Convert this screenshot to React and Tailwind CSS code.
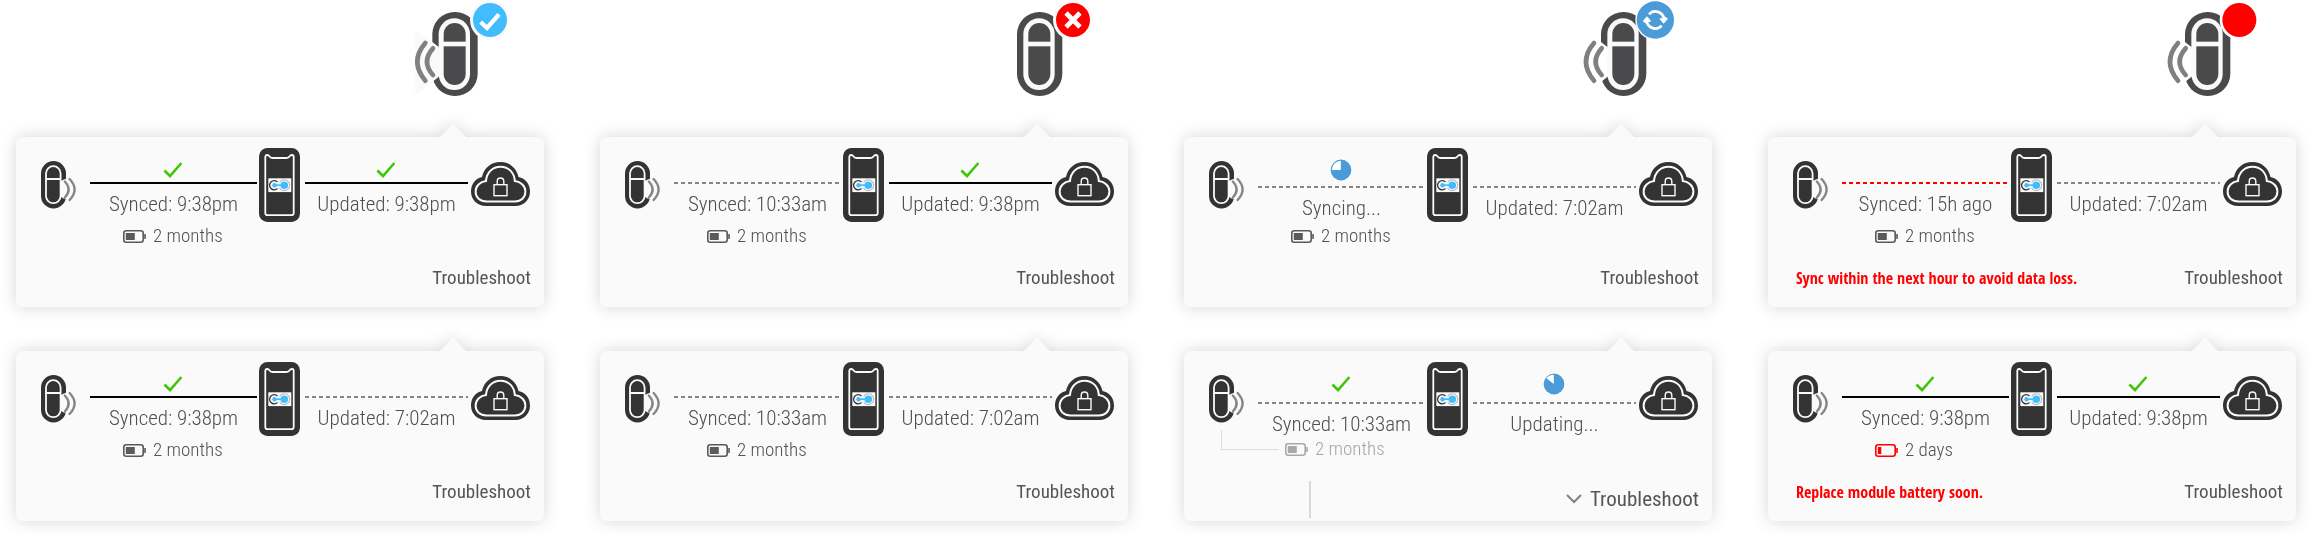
import React from "react";

const INK = "#333333";

function Badge({ kind }) {
  if (kind === "ok") {
    return (
      <g>
        <circle cx="270" cy="60" r="60" fill="#fafafa" />
        <circle cx="270" cy="60" r="51" fill="#41bdfd" />
        <path d="M242 66 L261 84 L297 43" fill="none" stroke="#fff" strokeWidth="13" />
      </g>
    );
  }
  if (kind === "error") {
    return (
      <g>
        <circle cx="267" cy="60" r="60" fill="#fafafa" />
        <circle cx="267" cy="60" r="51" fill="#ff0000" />
        <path d="M246 39 L288 81 M288 39 L246 81" fill="none" stroke="#fff" strokeWidth="14" />
      </g>
    );
  }
  if (kind === "sync") {
    return (
      <g>
        <circle cx="262" cy="60" r="60" fill="#fff" />
        <circle cx="262" cy="60" r="56" fill="#4a9bd8" />
        <path d="M243 43 A26 26 0 0 1 288 57" fill="none" stroke="#fff" strokeWidth="8" />
        <path d="M281 77 A26 26 0 0 1 236 63" fill="none" stroke="#fff" strokeWidth="8" />
        <path d="M274 56 L287 71 L300 56 L292 50 Z" fill="#fff" />
        <path d="M250 64 L237 49 L224 64 L232 70 Z" fill="#fff" />
      </g>
    );
  }
  return (
    <g>
      <circle cx="262" cy="60" r="59" fill="#fff" />
      <circle cx="262" cy="60" r="51" fill="#ff0000" />
    </g>
  );
}

function Device({ kind }) {
  const halo = kind === "ok" ? "#fafafa" : "#ffffff";
  return (
    <svg className="h-[110px] w-[130px]" viewBox="0 0 390 330" role="img" aria-label={"Module " + kind}>
      <g transform={kind === "ok" ? undefined : "translate(2 0)"}>
        {kind === "ok" && <path d="M46 91 L124 145 V228 L46 283 Z" fill={halo} />}
        <rect x="97" y="36" width="136" height="252" rx="67" fill="#4a4a4c" />
        {kind !== "error" && <path d="M90 121 L124 147 V224 L92 250 Z" fill={halo} />}
        <rect x="116" y="55" width="94" height="215" rx="47" fill="#fafafa" />
        <rect x="131" y="69" width="66" height="186" rx="33" fill="#4a4a4c" />
        <rect x="124" y="125" width="80" height="14" fill="#fafafa" />
        {kind !== "error" && (
          <g fill="none" stroke="#808080" strokeWidth="14" strokeLinecap="round">
            <path d="M99 145 Q63 185 99 225" />
            <path d="M76 129 Q28 185 76 242" />
          </g>
        )}
      </g>
      <Badge kind={kind} />
    </svg>
  );
}

function ModuleIcon() {
  return (
    <svg className="h-12 w-9" viewBox="0 0 36 48" aria-hidden="true">
      <rect x="0" y="0" width="25" height="47.5" rx="12.5" fill={INK} />
      <path d="M27 17 L23 18.5 L20 20 V36 L22.5 37.5 L27 38 Z" fill="#fafafa" />
      <rect x="5" y="5.2" width="14.6" height="37" rx="7.3" fill={INK} stroke="#fafafa" strokeWidth="1.8" />
      <path d="M5 18 H19.5" stroke="#fafafa" strokeWidth="2" />
      <g fill="none" stroke="#858585" strokeWidth="2.3" strokeLinecap="round">
        <path d="M23.8 20.5 Q31.5 28.5 23.8 36.5" />
        <path d="M28.6 18 Q38.6 28.5 28.6 39" />
      </g>
    </svg>
  );
}

function PhoneIcon() {
  return (
    <svg className="h-[74px] w-[41px]" viewBox="0 0 41 74" aria-hidden="true">
      <rect x="0" y="0" width="41" height="74" rx="8.5" fill={INK} />
      <path
        d="M6.3 65 V9 Q6.3 7 8 7 Q9.8 7 10.3 8.2 Q11.2 10 13.5 10 H27.5 Q29.8 10 30.7 8.2 Q31.2 7 33 7 Q34.7 7 34.7 9 V65 Q34.7 67.2 32.5 67.2 H8.5 Q6.3 67.2 6.3 65 Z"
        fill="none"
        stroke="#fafafa"
        strokeWidth="1.8"
      />
      <rect x="9.3" y="30.3" width="23" height="13.8" fill="#fafafa" />
      <path d="M18.5 34 A4.6 4.6 0 1 0 18.5 40.4" fill="none" stroke={INK} strokeWidth="1.3" />
      <path d="M20.6 34.5 A5.4 5.4 0 1 1 20.6 39.9" fill="none" stroke="#bdbdbd" strokeWidth="1.1" />
      <rect x="15" y="36.3" width="9" height="1.8" fill="#41bdfd" />
      <circle cx="15.5" cy="37.2" r="2.2" fill="#41bdfd" />
      <circle cx="25.3" cy="37.2" r="3.8" fill="#41bdfd" />
    </svg>
  );
}

function CloudIcon() {
  return (
    <svg className="h-11 w-[59px]" viewBox="0 0 59 44" aria-hidden="true">
      <path
        d="M15 44 C6 44 0 37.5 0 29.5 C0 22 4.5 16.5 11 15 C13 6 20 0 29.5 0 C38.5 0 45.5 6 47.5 15 C54.5 16.5 59 22 59 29.5 C59 37.5 53 44 44.5 44 Z"
        fill={INK}
      />
      <path
        d="M15.5 39.5 C9 39.5 4.6 35.5 4.6 29.5 C4.6 24 9 19.7 15 19 C15.5 10.5 21.5 4.7 29.5 4.7 C37.5 4.7 43.3 10.5 43.8 19 C50 19.7 54.4 24 54.4 29.5 C54.4 35.5 50 39.5 44 39.5 Z"
        fill="none"
        stroke="#fafafa"
        strokeWidth="2"
      />
      <rect x="23" y="22.7" width="13" height="11" fill="none" stroke="#fafafa" strokeWidth="1.4" />
      <path d="M26.2 22.5 V19.5 Q26.2 16 29.5 16 Q32.8 16 32.8 19.5 V22.5" fill="none" stroke="#fafafa" strokeWidth="1.4" />
    </svg>
  );
}

function Battery({ low }) {
  const color = low ? "#ff0000" : "#5a5a5a";
  return (
    <svg className="h-[13px] w-[23px] shrink-0" viewBox="0 0 23 13" aria-hidden="true">
      <rect x="0.8" y="0.8" width="19.4" height="11.4" rx="2.4" fill="none" stroke={color} strokeWidth="1.6" />
      <rect x="2.8" y="3" width={low ? 3.5 : 9} height="7" fill={color} />
      <path d="M22 4 V9" stroke={color} strokeWidth="1.6" />
    </svg>
  );
}

function Mark({ kind }) {
  if (kind === "check") {
    return (
      <svg className="h-4 w-5" viewBox="0 0 20 16" aria-hidden="true">
        <path d="M1.4 8.5 L7 14 L18.4 1" fill="none" stroke="#3fc60a" strokeWidth="2.6" />
      </svg>
    );
  }
  if (kind === "pie75" || kind === "pie85") {
    return (
      <svg className="h-[22px] w-[22px]" viewBox="0 0 22 22" aria-hidden="true">
        <circle cx="11" cy="11" r="11" fill="#ffffff" />
        <circle cx="11" cy="11" r="10.4" fill="#4a9bd8" />
        <path
          d={kind === "pie75" ? "M10.8 11 V1.8 A9 9 0 0 0 1.8 11 Z" : "M10.8 11 V1.8 A9 9 0 0 0 3.4 5.3 Z"}
          fill="#ffffff"
        />
      </svg>
    );
  }
  return null;
}

const LINES = {
  solid: "h-0.5 bg-black",
  dashed: "h-0.5 bg-[repeating-linear-gradient(90deg,#858585_0_4px,transparent_4px_7px)]",
  late: "h-0.5 bg-[repeating-linear-gradient(90deg,#ff0000_0_4px,transparent_4px_7px)]",
};

const SLOTS = {
  normal: "pt-[25px] h-[45px]",
  low: "pt-[22px] h-[49px]",
  lower: "pt-[25px] h-[51px]",
  lowest: "pt-[22px] h-[51px]",
};

function Link({ mark, line, slot = "normal", label, grow }) {
  return (
    <div className={"min-w-0 " + grow}>
      <div className={"flex justify-center " + SLOTS[slot]}>
        <Mark kind={mark} />
      </div>
      <div className={LINES[line]} />
      <p className="-mx-1 mt-2 text-center text-[21px] leading-6 whitespace-nowrap">{label}</p>
    </div>
  );
}

function Card({ left, right, battery = "2 months", low, warning, faded, expanded }) {
  return (
    <section className="relative flex h-[170px] flex-col rounded-md bg-[#fafafa] text-[#505050] drop-shadow-[0_0_8px_rgba(0,0,0,0.16)]">
      <svg className="absolute -top-[13px] right-[78px] h-[14px] w-[26px]" viewBox="0 0 26 14" aria-hidden="true">
        <path d="M0 13 L11.5 1 Q13 -0.5 14.5 1 L26 13 V14 H0 Z" fill="#fafafa" />
      </svg>
      <div className="flex h-[87px] items-start pr-[14px] pl-[25px]">
        <div className="w-[49px] shrink-0 pt-6">
          <ModuleIcon />
        </div>
        <Link {...left} grow="flex-[42]" />
        <div className="mr-[5px] ml-0.5 shrink-0 pt-[11px]">
          <PhoneIcon />
        </div>
        <Link {...right} grow="flex-[41]" />
        <div className="ml-[3px] shrink-0 pt-[25px]">
          <CloudIcon />
        </div>
      </div>
      {faded ? (
        <div className="-mt-2 flex h-8 items-start pl-[37px]">
          <span className="mr-[6px] h-5 w-[58px] border-b border-l border-[#dcdcdc]" />
          <div className="flex items-center gap-[7px] pt-[7px] text-[19px] leading-6 opacity-50">
            <Battery />
            <span>{battery}</span>
          </div>
        </div>
      ) : (
        <div className="flex items-center gap-[7px] pl-[107px] text-[19px] leading-6">
          <Battery low={low} />
          <span>{battery}</span>
        </div>
      )}
      {expanded ? (
        <div className="flex flex-1 items-start pt-[19px] pr-[13px] pl-[125px]">
          <span className="h-[37px] w-0.5 bg-[#d9d9d9]" />
          <button type="button" className="mt-1 ml-auto flex items-center gap-2 text-[21px] leading-7 font-normal text-[#555555]">
            <svg className="h-[10px] w-4" viewBox="0 0 16 10" aria-hidden="true">
              <path d="M1.5 1.5 L8 8 L14.5 1.5" fill="none" stroke="#808080" strokeWidth="2" strokeLinecap="round" />
            </svg>
            Troubleshoot
          </button>
        </div>
      ) : (
        <div className="flex flex-1 items-start justify-between pt-[18px] pr-[13px] pl-7">
          <p className="font-['Open_Sans_Condensed'] text-[16px] leading-6 font-bold text-[#ff0000]">{warning}</p>
          <button type="button" className="text-[19px] leading-6 font-normal text-[#555555]">
            Troubleshoot
          </button>
        </div>
      )}
    </section>
  );
}

const synced = { mark: "check", line: "solid", label: "Synced: 9:38pm" };
const updated = { mark: "check", line: "solid", label: "Updated: 9:38pm" };
const stale = { line: "dashed", label: "Updated: 7:02am" };
const old = { line: "dashed", label: "Synced: 10:33am" };

const COLUMNS = [
  { device: "ok", cards: [{ left: synced, right: updated }, { left: synced, right: stale }] },
  { device: "error", cards: [{ left: old, right: updated }, { left: old, right: stale }] },
  {
    device: "sync",
    cards: [
      {
        left: { mark: "pie75", line: "dashed", slot: "low", label: "Syncing..." },
        right: { ...stale, slot: "low" },
      },
      {
        left: { ...old, mark: "check", slot: "lower" },
        right: { mark: "pie85", line: "dashed", slot: "lowest", label: "Updating..." },
        faded: true,
        expanded: true,
      },
    ],
  },
  {
    device: "alert",
    cards: [
      {
        left: { line: "late", label: "Synced: 15h ago" },
        right: stale,
        warning: "Sync within the next hour to avoid data loss.",
      },
      { left: synced, right: updated, battery: "2 days", low: true, warning: "Replace module battery soon." },
    ],
  },
];

export default function App() {
  return (
    <main className="grid grid-cols-4 gap-x-14 bg-white pr-[19px] pb-[18px] pl-4 font-['Roboto_Condensed','Open_Sans_Condensed','Liberation_Sans',sans-serif] font-light">
      {COLUMNS.map((column) => (
        <div key={column.device} className="min-w-0">
          <div className="mb-[27px] flex justify-end pr-[14px]">
            <Device kind={column.device} />
          </div>
          <div className="flex flex-col gap-11">
            {column.cards.map((card, i) => (
              <Card key={i} {...card} />
            ))}
          </div>
        </div>
      ))}
    </main>
  );
}
